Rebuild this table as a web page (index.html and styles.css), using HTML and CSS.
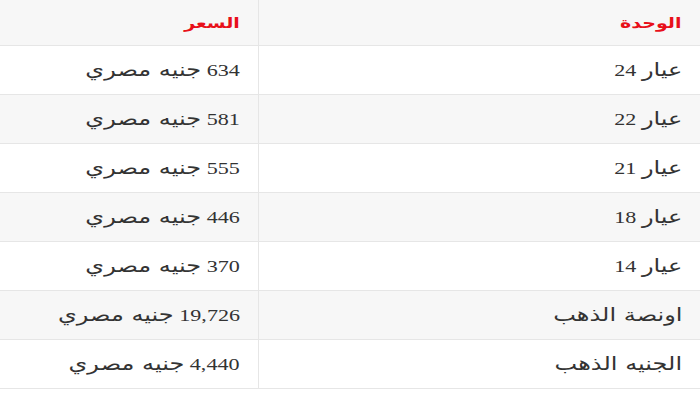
FILE: index.html
```html
<!DOCTYPE html>
<html lang="ar" dir="rtl">
<head>
<meta charset="utf-8">
<link rel="stylesheet" href="styles.css">
</head>
<body>
<table class="prices">
  <thead>
    <tr><th class="unit"><span class="t">الوحدة</span></th><th class="price"><span class="t">السعر</span></th></tr>
  </thead>
  <tbody>
    <tr><td class="unit"><span class="t"><span class="ar">عيار</span> 24</span></td><td class="price"><span class="t">634 <span class="ar">جنيه مصري</span></span></td></tr>
    <tr><td class="unit"><span class="t"><span class="ar">عيار</span> 22</span></td><td class="price"><span class="t">581 <span class="ar">جنيه مصري</span></span></td></tr>
    <tr><td class="unit"><span class="t"><span class="ar">عيار</span> 21</span></td><td class="price"><span class="t">555 <span class="ar">جنيه مصري</span></span></td></tr>
    <tr><td class="unit"><span class="t"><span class="ar">عيار</span> 18</span></td><td class="price"><span class="t">446 <span class="ar">جنيه مصري</span></span></td></tr>
    <tr><td class="unit"><span class="t"><span class="ar">عيار</span> 14</span></td><td class="price"><span class="t">370 <span class="ar">جنيه مصري</span></span></td></tr>
    <tr><td class="unit"><span class="t"><span class="ar">اونصة الذهب</span></span></td><td class="price"><span class="t">19,726 <span class="ar">جنيه مصري</span></span></td></tr>
    <tr><td class="unit"><span class="t"><span class="ar">الجنيه الذهب</span></span></td><td class="price"><span class="t">4,440 <span class="ar">جنيه مصري</span></span></td></tr>
  </tbody>
</table>
</body>
</html>
```

FILE: styles.css
```css
html, body {
  margin: 0;
  padding: 0;
  background: #ffffff;
}
.prices {
  width: 700px;
  border-collapse: collapse;
  table-layout: fixed;
  font-family: "Liberation Serif", "DejaVu Sans", serif;
  font-size: 17px;
  color: #333333;
}
.prices th, .prices td {
  text-align: right;
  padding: 0 18px 0 10px;
  border-bottom: 1px solid #e6e6e6;
  white-space: nowrap;
}
.prices th {
  height: 45px;
  background: #f7f7f7;
  color: #e8101a;
  font-family: "DejaVu Sans", sans-serif;
  font-weight: bold;
  font-size: 15px;
}
.prices td {
  height: 48px;
}
.prices .unit {
  border-left: 1px solid #e6e6e6;
}
.prices .price {
  width: 230px;
}
.prices tbody tr:nth-child(even) td {
  background: #f7f7f7;
}
.t {
  display: inline-block;
  transform: scaleX(1.3);
  transform-origin: right center;
}
.prices th .t {
  transform: scaleX(1.27);
}
.ar {
  font-family: "DejaVu Sans", sans-serif;
  font-size: 18.5px;
}
```
